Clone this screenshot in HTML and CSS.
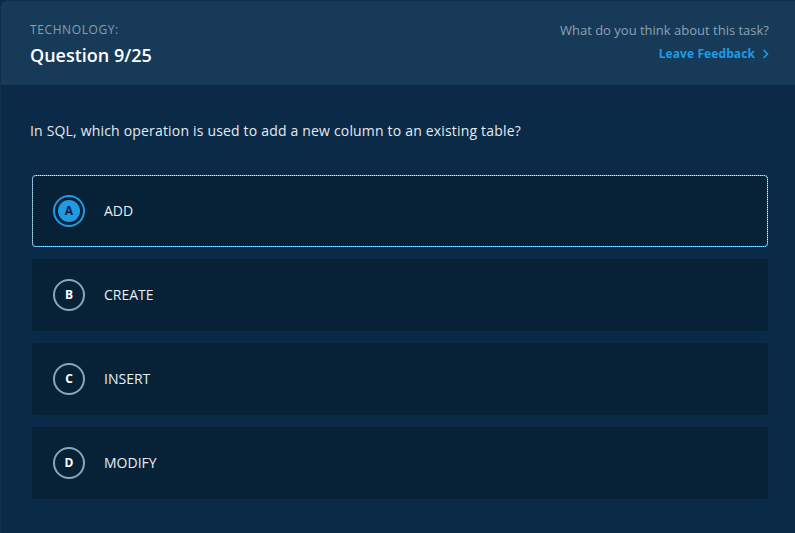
FILE: index.html
```html
<!DOCTYPE html>
<html>
<head>
<meta charset="utf-8">
<link rel="stylesheet" href="styles.css">
</head>
<body>
<div class="frame">
  <header class="head">
    <div class="head-left">
      <div class="category">TECHNOLOGY:</div>
      <div class="qnum">Question 9/25</div>
    </div>
    <div class="head-right">
      <div class="ask">What do you think about this task?</div>
      <a class="feedback">Leave Feedback <svg class="chev" width="7" height="10" viewBox="0 0 7 10"><path d="M1.5 1 L5.5 5 L1.5 9" fill="none" stroke="#1f9be6" stroke-width="1.6"/></svg></a>
    </div>
  </header>
  <main class="content">
    <p class="question">In SQL, which operation is used to add a new column to an existing table?</p>
    <div class="options">
      <div class="option selected"><span class="badge"><span class="badge-inner">A</span></span><span class="label">ADD</span></div>
      <div class="option"><span class="badge"><span class="badge-inner">B</span></span><span class="label">CREATE</span></div>
      <div class="option"><span class="badge"><span class="badge-inner">C</span></span><span class="label">INSERT</span></div>
      <div class="option"><span class="badge"><span class="badge-inner">D</span></span><span class="label">MODIFY</span></div>
    </div>
  </main>
</div>
</body>
</html>
```
FILE: styles.css
```css
html, body {
  margin: 0;
  padding: 0;
  background: #0b2a47;
  height: 100%;
}
body {
  font-family: "Open Sans", "Noto Sans", sans-serif;
}
.frame {
  min-height: 533px;
  background: #0a2a47;
  border-top: 1px solid #10304c;
  border-left: 1px solid #10304c;
  border-top-left-radius: 7px;
  overflow: hidden;
  box-sizing: border-box;
}
.head {
  height: 84px;
  background: #173a58;
  display: flex;
  justify-content: space-between;
  padding: 0 26px 0 29px;
  box-sizing: border-box;
}
.head-left {
  padding-top: 21px;
}
.category {
  font-size: 12px;
  line-height: 16px;
  letter-spacing: 0.6px;
  color: #869fb3;
}
.qnum {
  margin-top: 5px;
  font-size: 18px;
  line-height: 24px;
  font-weight: 600;
  color: #ffffff;
}
.head-right {
  padding-top: 21px;
  text-align: right;
}
.ask {
  font-size: 13px;
  line-height: 16px;
  color: #8aa2b6;
}
.feedback {
  display: inline-flex;
  align-items: center;
  gap: 7px;
  margin-top: 8px;
  font-size: 12px;
  line-height: 16px;
  font-weight: 700;
  color: #1f9be6;
  letter-spacing: 0.1px;
}
.content {
  padding: 0 27px 0 31px;
}
.question {
  margin: 0 0 0 -2px;
  padding-top: 36px;
  font-size: 14px;
  line-height: 20px;
  letter-spacing: 0.18px;
  color: #e4ebf0;
}
.options {
  margin-top: 34px;
  display: flex;
  flex-direction: column;
  gap: 12px;
}
.option {
  height: 72px;
  box-sizing: border-box;
  background: #072237;
  border-radius: 4px;
  display: flex;
  align-items: center;
  padding-left: 20px;
  padding-bottom: 1px;
  gap: 20px;
  border: 1px solid transparent;
}
.option.selected {
  border: 1px solid #1f9be6;
  outline: 1px dotted #dfeaf2;
  outline-offset: -1px;
}
.badge {
  width: 32px;
  height: 32px;
  box-sizing: border-box;
  border-radius: 50%;
  border: 2px solid #8aa6b8;
  display: flex;
  align-items: center;
  justify-content: center;
}
.badge-inner {
  font-size: 12px;
  font-weight: 700;
  color: #ffffff;
  line-height: 1;
}
.selected .badge {
  border-color: #1f9be6;
}
.selected .badge-inner {
  width: 22px;
  height: 22px;
  border-radius: 50%;
  background: #1f9be6;
  color: #07223a;
  display: flex;
  align-items: center;
  justify-content: center;
}
.label {
  font-size: 14px;
  color: #e8eef3;
  margin-left: -1px;
}
```
